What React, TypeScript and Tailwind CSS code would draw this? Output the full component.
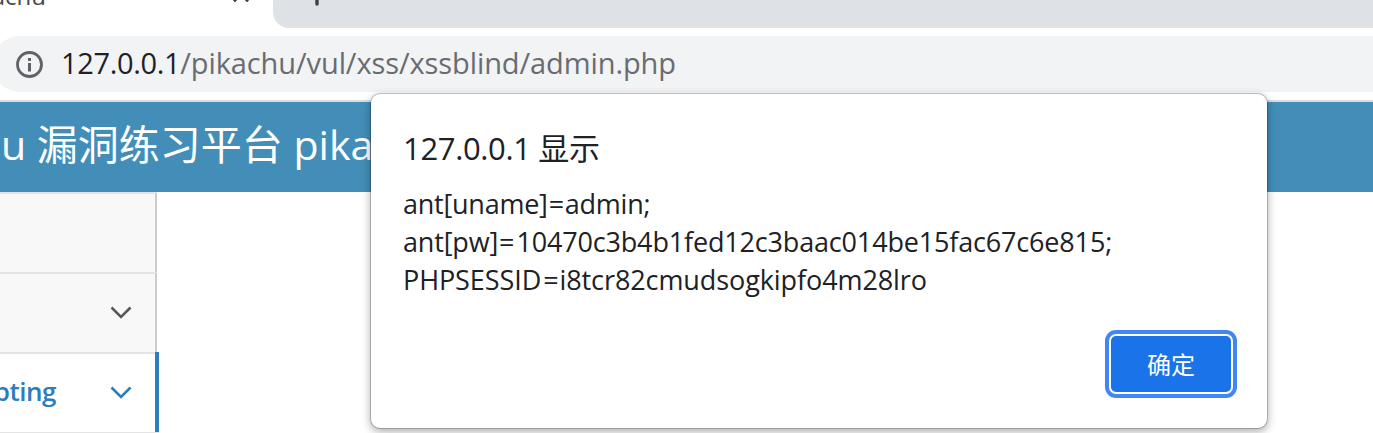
function BrowserChrome() {
  return (
    <div className="flex h-[100px] flex-col bg-white">
      <div className="flex h-9 shrink-0 overflow-hidden">
        <div className="flex w-[273px] shrink-0 justify-between">
          <span className="-mt-[20px] flex h-[32px] w-[46px] justify-end font-['Open_Sans','Noto_Sans_CJK_SC',sans-serif] text-[24px] leading-[32px] whitespace-nowrap text-[#45494d]">
            pikachu
          </span>
          <svg className="-mt-[14px] mr-6" width="16" height="16" viewBox="0 0 16 16" fill="none" stroke="#3c4043" strokeWidth="2.6">
            <path d="M1 0.5 15 15.5M15 0.5 1 15.5" />
          </svg>
        </div>
        <div className="h-7 flex-1 rounded-bl-[16px] bg-[#dee1e6]">
          <svg className="-mt-[16px] ml-[33px]" width="22" height="22" viewBox="0 0 22 22" fill="none" stroke="#3c4043" strokeWidth="3.4" strokeLinecap="round">
            <path d="M11 2v18M2 11h18" />
          </svg>
        </div>
      </div>
      <div className="-ml-2 flex h-14 shrink-0 items-center rounded-l-full bg-[#f1f3f4] pl-6">
        <svg className="shrink-0" width="27" height="27" viewBox="0 0 27 27" fill="none">
          <circle cx="13.5" cy="13.5" r="12" stroke="#5f6368" strokeWidth="2.8" />
          <path d="M12 7h3v3h-3zM12 12h3v8.5h-3z" fill="#5f6368" />
        </svg>
        <span className="mb-0.5 ml-[18px] font-['Open_Sans',sans-serif] text-[29px] leading-[40px] tracking-[-0.35px] whitespace-nowrap text-[#202124]">
          127.0.0.1<span className="tracking-[-0.09px] text-[#696c70]">/pikachu/vul/xss/xssblind/admin.php</span>
        </span>
      </div>
    </div>
  );
}

function Chevron() {
  return (
    <svg width="22" height="14" viewBox="0 0 22 14" fill="none" stroke="currentColor" strokeWidth="2.6">
      <path d="M1.5 1.5 11 11 20.5 1.5" />
    </svg>
  );
}

function Sidebar() {
  return (
    <nav className="flex w-[159px] flex-col font-['Open_Sans',sans-serif]">
      <div className="mr-0.5 h-20 shrink-0 border-t-2 border-r-2 border-t-[#e4e4e4] border-r-[#ccc] bg-[#f8f8f8]" />
      <div className="mr-0.5 flex h-20 shrink-0 items-center justify-end border-t-2 border-r-2 border-t-[#e4e4e4] border-r-[#ccc] bg-[#f8f8f8] pr-[23px] text-[#585858]">
        <Chevron />
      </div>
      <div className="flex h-20 shrink-0 border-r-4 border-[#2b7dbc] bg-white text-[#2b7dbc]">
        <div className="flex flex-1 items-center justify-between border-t-2 border-[#e4e4e4] pr-[23px]">
          <span className="mb-1 flex w-[56px] justify-end text-[26px] leading-[36px] font-semibold tracking-[-0.5px] whitespace-nowrap">
            Cross-Site Scripting
          </span>
          <Chevron />
        </div>
      </div>
      <div className="h-1 border-t-2 border-[#e4e4e4]" />
    </nav>
  );
}

function AlertDialog() {
  return (
    <div
      role="alertdialog"
      className="absolute top-[94px] left-[371px] flex h-[334px] w-[896px] flex-col rounded-[9px] bg-white px-8 font-['Open_Sans','Noto_Sans_CJK_SC',sans-serif] text-[#202124] shadow-[0_0_0_1px_rgba(0,0,0,0.2),0_3px_9px_1px_rgba(0,0,0,0.3)]"
    >
      <h1 className="mt-[34px] h-10 text-[31px] leading-[40px] tracking-[-0.35px] whitespace-nowrap">127.0.0.1 显示</h1>
      <div className="mt-[17px] text-[27px] leading-[38px] whitespace-nowrap">
        <p className="tracking-[-0.25px]">
          ant[uname]<span className="mx-px">=</span>admin;
        </p>
        <p className="tracking-[-0.17px]">
          ant[pw]<span className="mr-0.5 ml-px">=</span>10470c3b4b1fed12c3baac014be15fac67c6e815;
        </p>
        <p className="tracking-[-0.09px]">
          PHPSESSID<span className="mr-px ml-0.5">=</span>i8tcr82cmudsogkipfo4m28lro
        </p>
      </div>
      <button className="mt-[35px] mr-0.5 flex h-[60px] w-[124px] items-center justify-center self-end rounded-[7px] border-2 border-white bg-[#1a73e8] pt-0.5 text-[24px] text-white shadow-[0_0_0_4px_#4285f4]">
        确定
      </button>
    </div>
  );
}

export default function App() {
  return (
    <div className="relative h-[433px] w-full overflow-hidden bg-white">
      <BrowserChrome />
      <header className="flex h-[92px] items-center border-t-2 border-[#dadce0] bg-[#438eb9] pb-1.5 pl-px font-['Open_Sans','Noto_Sans_CJK_SC',sans-serif] text-[41px] whitespace-nowrap text-white">
        <h1 className="leading-[56px]">u 漏洞练习平台 pikachu</h1>
      </header>
      <Sidebar />
      <AlertDialog />
    </div>
  );
}
